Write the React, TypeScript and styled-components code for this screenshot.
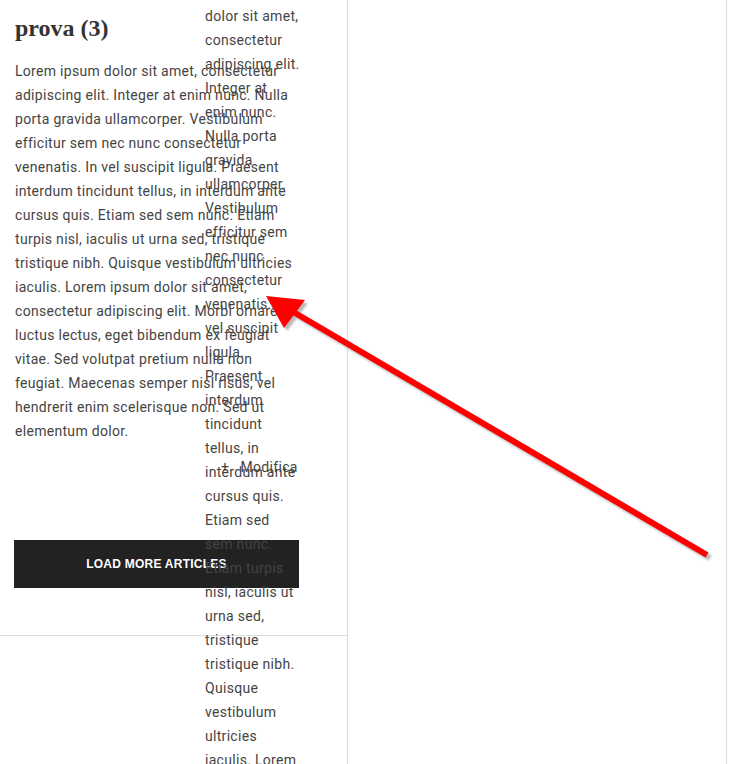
import React from "react";
import styled, { createGlobalStyle } from "styled-components";

const Global = createGlobalStyle`
  html, body { margin: 0; padding: 0; background: #fff; }
  body { font-family: Roboto, "Liberation Sans", sans-serif; overflow: hidden; }
`;

const Page = styled.div`
  position: relative;
  display: flex;
  width: 755px;
  height: 764px;
  overflow: hidden;
  background: #fff;
`;

const LeftColumn = styled.div`
  position: relative;
  width: 347px;
  border-right: 1px solid #dcdcdc;
  display: flex;
  flex-direction: column;
`;

const ArticleBox = styled.section`
  height: 636px;
  box-sizing: border-box;
  border-bottom: 1px solid #dcdcdc;
  padding: 13px 0 0 14px;
  display: flex;
  flex-direction: column;
`;

const Title = styled.h2`
  margin: 0;
  font-family: "Liberation Serif", serif;
  font-weight: 700;
  font-size: 24px;
  line-height: 30px;
  color: #333;
  padding-left: 1px;
`;

const Paragraph = styled.p`
  margin: 16px 0 0 0;
  padding-left: 1px;
  font-size: 14px;
  line-height: 24px;
  letter-spacing: 0.3px;
  color: #444;
`;

const Line = styled.span`
  display: block;
  white-space: nowrap;
`;

const LoadButton = styled.button`
  margin-top: 97px;
  width: 285px;
  height: 48px;
  border: none;
  background: #222;
  color: #fff;
  font-family: "Liberation Sans", Arial, sans-serif;
  font-weight: 700;
  font-size: 12px;
  letter-spacing: 0.25px;
  text-transform: uppercase;
  cursor: pointer;
  padding: 0;
`;

const OverflowColumn = styled.div`
  position: absolute;
  left: 205px;
  top: -20px;
  font-size: 14px;
  line-height: 24px;
  letter-spacing: 0.3px;
  color: #444;
`;

const EditLink = styled.a`
  position: absolute;
  left: 221px;
  top: 455px;
  font-size: 14px;
  line-height: 24px;
  letter-spacing: 0.3px;
  color: #444;
  text-decoration: none;
  white-space: nowrap;
`;

const RightPanel = styled.div`
  width: 378px;
  border-right: 1px solid #dcdcdc;
`;

const ArrowLayer = styled.svg`
  position: absolute;
  left: 0;
  top: 0;
  pointer-events: none;
`;

const mainLines = [
  "Lorem ipsum dolor sit amet, consectetur",
  "adipiscing elit. Integer at enim nunc. Nulla",
  "porta gravida ullamcorper. Vestibulum",
  "efficitur sem nec nunc consectetur",
  "venenatis. In vel suscipit ligula. Praesent",
  "interdum tincidunt tellus, in interdum ante",
  "cursus quis. Etiam sed sem nunc. Etiam",
  "turpis nisl, iaculis ut urna sed, tristique",
  "tristique nibh. Quisque vestibulum ultricies",
  "iaculis. Lorem ipsum dolor sit amet,",
  "consectetur adipiscing elit. Morbi ornare",
  "luctus lectus, eget bibendum ex feugiat",
  "vitae. Sed volutpat pretium nulla non",
  "feugiat. Maecenas semper nisl risus, vel",
  "hendrerit enim scelerisque non. Sed ut",
  "elementum dolor.",
];

const narrowLines = [
  "Lorem ipsum",
  "dolor sit amet,",
  "consectetur",
  "adipiscing elit.",
  "Integer at",
  "enim nunc.",
  "Nulla porta",
  "gravida",
  "ullamcorper.",
  "Vestibulum",
  "efficitur sem",
  "nec nunc",
  "consectetur",
  "venenatis. In",
  "vel suscipit",
  "ligula.",
  "Praesent",
  "interdum",
  "tincidunt",
  "tellus, in",
  "interdum ante",
  "cursus quis.",
  "Etiam sed",
  "sem nunc.",
  "Etiam turpis",
  "nisl, iaculis ut",
  "urna sed,",
  "tristique",
  "tristique nibh.",
  "Quisque",
  "vestibulum",
  "ultricies",
  "iaculis. Lorem",
  "ipsum dolor",
];

export default function App() {
  return (
    <>
      <Global />
      <Page>
        <LeftColumn>
          <ArticleBox>
            <Title>prova (3)</Title>
            <Paragraph>
              {mainLines.map((l, i) => (
                <Line key={i}>{l}</Line>
              ))}
            </Paragraph>
            <LoadButton>Load more articles</LoadButton>
          </ArticleBox>
          <OverflowColumn>
            {narrowLines.map((l, i) => (
              <Line key={i}>{l}</Line>
            ))}
          </OverflowColumn>
          <EditLink href="#">+&nbsp;&nbsp;&nbsp;Modifica</EditLink>
        </LeftColumn>
        <RightPanel />
        <ArrowLayer width="755" height="764" viewBox="0 0 755 764">
          <defs>
            <filter id="sh" x="-10%" y="-10%" width="120%" height="120%">
              <feGaussianBlur stdDeviation="1.2" />
            </filter>
          </defs>
          <g transform="translate(3,3)" fill="#888" opacity="0.6" filter="url(#sh)">
            <line x1="707" y1="555" x2="290" y2="310" stroke="#888" strokeWidth="6" />
            <polygon points="266,296 305,300 284,328" />
          </g>
          <line x1="707" y1="555" x2="290" y2="310" stroke="#ff0000" strokeWidth="6" />
          <polygon points="266,296 305,300 284,328" fill="#ff0000" />
        </ArrowLayer>
      </Page>
    </>
  );
}
